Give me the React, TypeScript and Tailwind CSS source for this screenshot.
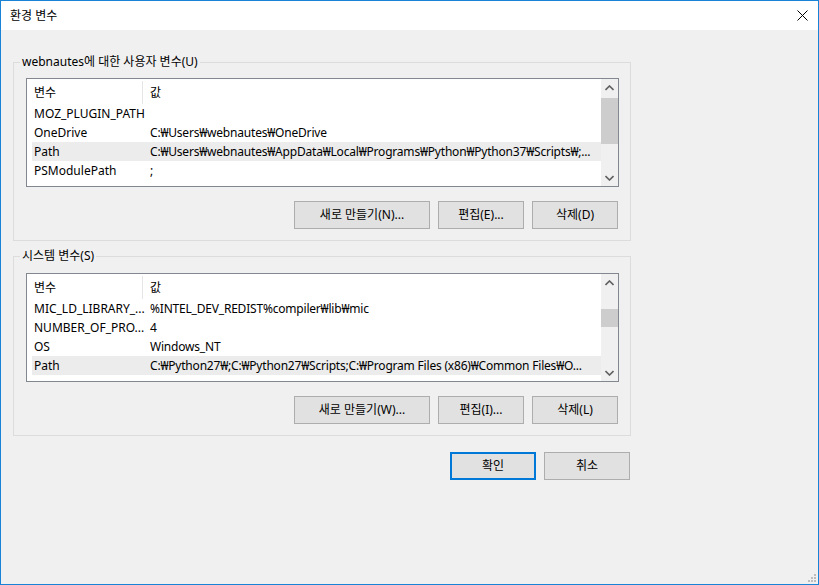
import React from "react";

const FONT = { fontFamily: '"Noto Sans", "Noto Sans CJK KR", sans-serif' };

function Chevron({ up }: { up?: boolean }) {
  return (
    <svg width="9" height="6" viewBox="0 0 9 6" className="block">
      {up ? (
        <path d="M0.5 5 L4.5 1 L8.5 5" fill="none" stroke="#606060" strokeWidth="1.6" />
      ) : (
        <path d="M0.5 1 L4.5 5 L8.5 1" fill="none" stroke="#606060" strokeWidth="1.6" />
      )}
    </svg>
  );
}

type Row = [string, string];

function ListView({ rows, thumbTop, thumbH, selected }: { rows: Row[]; thumbTop: number; thumbH: number; selected: number }) {
  return (
    <div className="flex h-[109px] w-[593px] border border-[#828790] bg-white">
      <div className="flex min-w-0 flex-1 flex-col overflow-hidden">
        <div className="flex h-[25px] shrink-0 items-center pt-[2px]">
          <div className="flex h-full w-[116px] items-center border-r border-[#e5e5e5] pl-[7px]">변수</div>
          <div className="pl-[7px]">값</div>
        </div>
        {rows.map((r, i) => (
          <div
            key={i}
            className={`ml-[5px] flex h-[19px] shrink-0 items-center whitespace-nowrap ${i === selected ? "bg-[#ececec]" : ""}`}
          >
            <div className="w-[118px] shrink-0 overflow-hidden pl-[2px]">{r[0]}</div>
            <div className="tracking-[-0.2px]">{r[1]}</div>
          </div>
        ))}
      </div>
      <div className="flex w-[17px] shrink-0 flex-col bg-[#f0f0f0]">
        <div className="flex h-[17px] items-center justify-center">
          <Chevron up />
        </div>
        <div className="relative flex-1">
          <div className="absolute left-0 right-0 bg-[#cdcdcd]" style={{ top: thumbTop, height: thumbH }} />
        </div>
        <div className="flex h-[17px] items-center justify-center">
          <Chevron />
        </div>
      </div>
    </div>
  );
}

function Btn({ children, w, primary }: { children: React.ReactNode; w: string; primary?: boolean }) {
  return (
    <div
      className={`flex h-[28px] items-center justify-center bg-[#e1e1e1] ${w} ${
        primary ? "border-2 border-[#0078d7]" : "border border-[#adadad]"
      }`}
    >
      {children}
    </div>
  );
}

function Group({
  label,
  children,
  h,
  listTop,
}: {
  label: string;
  children: React.ReactNode;
  h: string;
  listTop: string;
}) {
  return (
    <div className={`relative w-[618px] border border-[#dcdcdc] ${h} pl-[12px] ${listTop}`}>
      <div className="absolute left-[6px] top-[-10px] bg-[#f0f0f0] px-[2px] leading-[18px]">{label}</div>
      {children}
    </div>
  );
}

export default function App() {
  const userRows: Row[] = [
    ["MOZ_PLUGIN_PATH", ""],
    ["OneDrive", "C:₩Users₩webnautes₩OneDrive"],
    ["Path", "C:₩Users₩webnautes₩AppData₩Local₩Programs₩Python₩Python37₩Scripts₩;..."],
    ["PSModulePath", ";"],
  ];
  const sysRows: Row[] = [
    ["MIC_LD_LIBRARY_...", "%INTEL_DEV_REDIST%compiler₩lib₩mic"],
    ["NUMBER_OF_PRO...", "4"],
    ["OS", "Windows_NT"],
    ["Path", "C:₩Python27₩;C:₩Python27₩Scripts;C:₩Program Files (x86)₩Common Files₩O..."],
  ];
  return (
    <div
      className="relative flex h-[585px] w-[819px] flex-col overflow-hidden border border-[#1883d7] bg-[#f0f0f0] text-[12px] text-black"
      style={FONT}
    >
      <div className="flex h-[29px] shrink-0 items-center justify-between bg-white pl-[9px] pr-[10px]">
        <span className="text-[12px]">환경 변수</span>
        <svg width="11" height="11" viewBox="0 0 11 11">
          <path d="M0.5 0.5 L10.5 10.5 M10.5 0.5 L0.5 10.5" stroke="#000" strokeWidth="1" />
        </svg>
      </div>
      <div className="flex flex-col pl-[12px] pt-[32px]">
        <Group label="webnautes에 대한 사용자 변수(U)" h="h-[179px]" listTop="pt-[15px]">
          <ListView rows={userRows} thumbTop={2} thumbH={46} selected={2} />
          <div className="mt-[14px] flex w-[592px] justify-end gap-[8px]">
            <Btn w="w-[136px]">새로 만들기(N)...</Btn>
            <Btn w="w-[86px]">편집(E)...</Btn>
            <Btn w="w-[86px]">삭제(D)</Btn>
          </div>
        </Group>
        <div className="h-[15px]" />
        <Group label="시스템 변수(S)" h="h-[180px]" listTop="pt-[16px]">
          <ListView rows={sysRows} thumbTop={18} thumbH={18} selected={3} />
          <div className="mt-[14px] flex w-[592px] justify-end gap-[8px]">
            <Btn w="w-[136px]">새로 만들기(W)...</Btn>
            <Btn w="w-[86px]">편집(I)...</Btn>
            <Btn w="w-[86px]">삭제(L)</Btn>
          </div>
        </Group>
        <div className="mt-[16px] flex w-[617px] justify-end gap-[8px]">
          <Btn w="w-[86px]" primary>
            확인
          </Btn>
          <Btn w="w-[86px]">취소</Btn>
        </div>
      </div>
      <svg className="absolute bottom-[1px] right-[1px]" width="10" height="10" viewBox="0 0 10 10">
        {[
          [7, 1],
          [7, 4],
          [4, 4],
          [7, 7],
          [4, 7],
          [1, 7],
        ].map(([x, y], i) => (
          <rect key={i} x={x} y={y} width="2" height="2" fill="#bdbdbd" />
        ))}
      </svg>
    </div>
  );
}
